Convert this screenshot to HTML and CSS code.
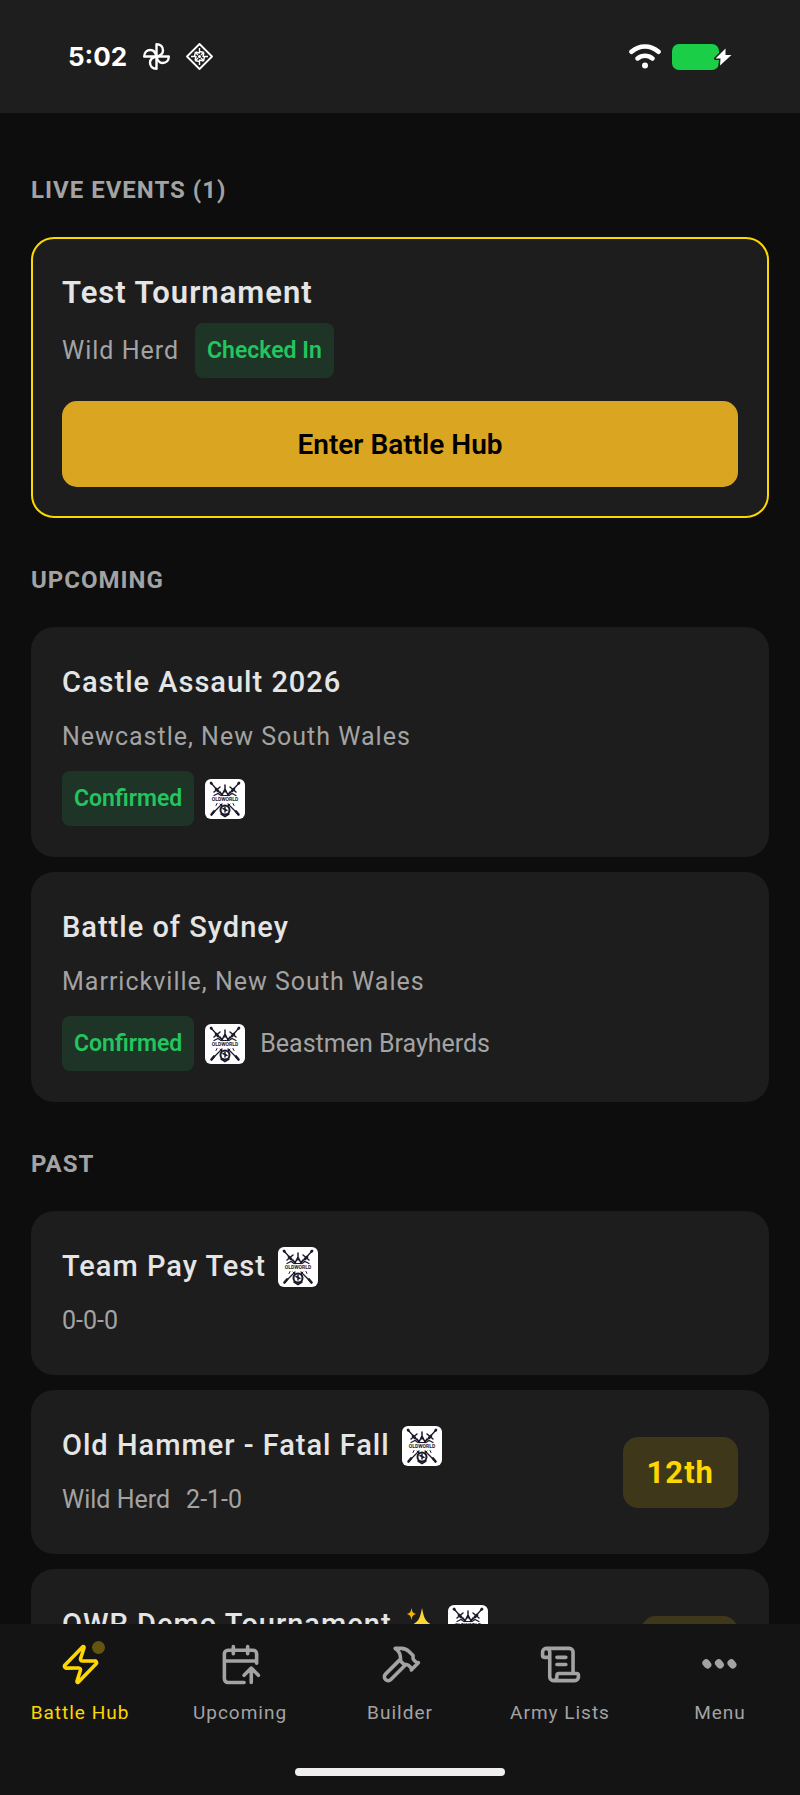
FILE: index.html
```
<!DOCTYPE html>
<html lang="en">
<head>
    <meta charset="UTF-8">
    <meta name="viewport" content="width=device-width, initial-scale=1.0">
    <title>Battle Hub</title>
    <link rel="stylesheet" href="styles.css">
</head>
<body>

    <!-- Shared club logo -->
    <svg class="sprite" aria-hidden="true">
        <symbol id="club-logo" viewBox="0 0 40 40">
            <rect width="40" height="40" rx="6" fill="#fff"/>
            <g stroke="#1c1a2a" fill="none" stroke-linecap="round">
                <path stroke-width="1.3" d="M6 4l9 10M34 4l-9 10M17 25L7 35M23 25l10 10"/>
                <path stroke-width="2.6" d="M6 4l.5.5M34 4l-.5.5M11 10l2 2M29 10l-2 2M6.5 35.500l2.500-3M33.500 35.500L31 32.500"/>
                <path stroke-width="1.5" d="M9 13l6-5M31 13l-6-5M15 13l2 3 3-6 3 6 2-3M20 6v7"/>
                <path stroke-width="1.2" d="M9 16.500l4-2 3 2M31 16.500l-4-2-3 2M17 16.500h6"/>
                <path stroke-width="1" d="M11 26.500l1-2M29 26.500l-1-2M15 25l2 2M25 25l-2 2"/>
                <circle stroke-width="2" cx="20" cy="31" r="4.500"/>
                <path stroke-width="1.500" d="M18 29.500l4 2M20 28v5M16 35l4 2.500 4-2.500"/>
            </g>
            <text class="logo-text" x="20" y="22" text-anchor="middle">OLDWORLD</text>
        </symbol>
    </svg>

    <header class="status-bar">
        <div class="status-group">
            <time class="clock">5:02</time>
            <svg class="status-icon" viewBox="0 0 27 27" fill="none" stroke="#fff" stroke-width="2.400" stroke-linejoin="round">
                <path d="M13.500 13.500V1.200c4 0 6.500 2.500 6.500 6.200 0 3-2 5.100-6.500 6.100z"/>
                <path d="M13.500 13.500h12.300c0 4-2.500 6.500-6.200 6.500-3 0-5.100-2-6.100-6.500z"/>
                <path d="M13.500 13.500v12.300C9.500 25.800 7 23.300 7 19.600c0-3 2-5.100 6.500-6.100z"/>
                <path d="M13.500 13.500H1.200C1.200 9.500 3.700 7 7.400 7c3 0 5.100 2 6.100 6.500z"/>
            </svg>
            <svg class="status-icon" viewBox="0 0 27 27" fill="none" stroke="#fff" stroke-linejoin="round">
                <path stroke-width="1.800" d="M13.500 1L26 13.500 13.500 26 1 13.500z"/>
                <path stroke-width="1.400" d="M13.500 5v5l-4-1M22 13.500h-5l1-4M13.500 22v-5l4 1M5 13.500h5l-1 4M9.500 9l-1 4M18 9.500l-4-1M17.500 18l1-4M9 17.500l4 1"/>
                <path stroke-width="1.400" d="M10 10l2 2M17 10l-2 2M10 17l2-2M17 17l-2-2"/>
                <circle cx="13.500" cy="13.500" r="1.500" fill="#fff" stroke="none"/>
            </svg>
        </div>
        <div class="status-group status-group-right">
            <svg class="wifi" viewBox="0 0 32 25" fill="none" stroke="#fff" stroke-width="4.600" stroke-linecap="round">
                <path d="M2.500 7.800c8-7 19-7 27 0M8.600 14.400c4.300-3.600 10.500-3.600 14.800 0"/>
                <circle cx="16" cy="21.500" r="3" fill="#fff" stroke="none"/>
            </svg>
            <svg class="battery" viewBox="0 0 60 26">
                <rect width="47" height="26" rx="7" fill="#1ace48"/>
                <path d="M53.500 4.500L43.500 14.500h5l-.5 7L59.500 11h-6z" fill="#fff" stroke="#1e1e1e" stroke-width="3" stroke-linejoin="round" paint-order="stroke"/>
            </svg>
        </div>
    </header>

    <main class="events">
        <section>
            <h2 class="section-title">LIVE EVENTS (1)</h2>
            <article class="card card-live">
                <h3 class="live-title">Test Tournament</h3>
                <div class="live-info">
                    <span class="card-sub">Wild Herd</span>
                    <span class="pill">Checked In</span>
                </div>
                <button type="button" class="enter-btn">Enter Battle Hub</button>
            </article>
        </section>

        <section>
            <h2 class="section-title">UPCOMING</h2>
            <div class="card-list">
                <article class="card">
                    <h3 class="card-title">Castle Assault 2026</h3>
                    <p class="card-sub">Newcastle, New South Wales</p>
                    <div class="tags">
                        <span class="pill">Confirmed</span>
                        <svg class="logo"><use href="#club-logo"/></svg>
                    </div>
                </article>
                <article class="card">
                    <h3 class="card-title">Battle of Sydney</h3>
                    <p class="card-sub">Marrickville, New South Wales</p>
                    <div class="tags">
                        <span class="pill">Confirmed</span>
                        <svg class="logo"><use href="#club-logo"/></svg>
                        <span class="army">Beastmen Brayherds</span>
                    </div>
                </article>
            </div>
        </section>

        <section>
            <h2 class="section-title">PAST</h2>
            <div class="card-list">
                <article class="card card-past">
                    <div>
                        <h3 class="card-title">Team Pay Test <svg class="logo"><use href="#club-logo"/></svg></h3>
                        <p class="result"><span>0-0-0</span></p>
                    </div>
                </article>
                <article class="card card-past">
                    <div>
                        <h3 class="card-title">Old Hammer - Fatal Fall <svg class="logo"><use href="#club-logo"/></svg></h3>
                        <p class="result"><span>Wild Herd</span><span>2-1-0</span></p>
                    </div>
                    <span class="rank">12th</span>
                </article>
                <article class="card card-past">
                    <div>
                        <h3 class="card-title">OWR Demo Tournament
                            <svg class="sparkles" viewBox="0 0 32 36">
                                <path d="M18 1c2 11 4 15 13 18-9 3-11 7-13 16-2-9-4-13-13-16C14 16 16 12 18 1z" fill="#fdd835"/>
                                <path d="M7.500 1c.7 4 1.500 5 4.500 6-3 1-3.800 2-4.500 6-.7-4-1.500-5-4.500-6 3-1 3.800-2 4.500-6z" fill="#f4b400"/>
                            </svg>
                            <svg class="logo"><use href="#club-logo"/></svg>
                        </h3>
                        <p class="result"><span>Wild Herd</span></p>
                    </div>
                    <span class="rank">4th</span>
                </article>
            </div>
        </section>
    </main>

    <footer class="bottom">
        <nav class="tabs">
            <a href="#" class="tab active">
                <span class="tab-icon">
                    <svg viewBox="0 0 24 24"><path d="M4 14a1 1 0 0 1-.78-1.630l9.900-10.200a.5.5 0 0 1 .86.460l-1.920 6.020A1 1 0 0 0 13 10h7a1 1 0 0 1 .78 1.630l-9.900 10.200a.5.5 0 0 1-.86-.460l1.920-6.020A1 1 0 0 0 11 14z"/></svg>
                    <span class="live-dot"></span>
                </span>
                Battle Hub
            </a>
            <a href="#" class="tab">
                <span class="tab-icon">
                    <svg viewBox="0 0 24 24"><path d="m14 18 4-4 4 4M16 2v4M18 22v-8M21 11.343V6a2 2 0 0 0-2-2H5a2 2 0 0 0-2 2v14a2 2 0 0 0 2 2h9M3 10h18M8 2v4"/></svg>
                </span>
                Upcoming
            </a>
            <a href="#" class="tab">
                <span class="tab-icon">
                    <svg viewBox="0 0 24 24"><path d="m15 12-8.373 8.373a1 1 0 1 1-3-3L12 9M18 15l4-4M21.500 11.500l-1.914-1.914A2 2 0 0 1 19 8.172V7l-2.260-2.260a6 6 0 0 0-4.202-1.756L9 2.960l.92.820A6.180 6.180 0 0 1 12 8.400V10l2 2h1.172a2 2 0 0 1 1.414.586L18.500 14.500"/></svg>
                </span>
                Builder
            </a>
            <a href="#" class="tab">
                <span class="tab-icon">
                    <svg viewBox="0 0 24 24"><path d="M15 12h-5M15 8h-5M19 17V5a2 2 0 0 0-2-2H4M8 21h12a2 2 0 0 0 2-2v-1a1 1 0 0 0-1-1H11a1 1 0 0 0-1 1v1a2 2 0 1 1-4 0V5a2 2 0 1 0-4 0v2a1 1 0 0 0 1 1h3"/></svg>
                </span>
                Army Lists
            </a>
            <a href="#" class="tab">
                <span class="tab-icon">
                    <svg viewBox="0 0 24 24"><path stroke-width="4.200" d="M4 11.200l.8.900M11 11.200l.8.900M18 11.200l.8.900"/></svg>
                </span>
                Menu
            </a>
        </nav>
        <div class="home-indicator"></div>
    </footer>

</body>
</html>
```
FILE: styles.css
```
* {
    box-sizing: border-box;
}

body {
    margin: 0;
    height: 100vh;
    display: flex;
    flex-direction: column;
    background: #0d0d0d;
    color: #e5e5e5;
    font-family: Roboto, "Liberation Sans", sans-serif;
    letter-spacing: 1px;
}

h2, h3, p {
    margin: 0;
}

.sprite {
    position: absolute;
    width: 0;
    height: 0;
}

/* Status bar */
.status-bar {
    flex: none;
    height: 113px;
    padding: 0 68px;
    display: flex;
    justify-content: space-between;
    align-items: center;
    background: #1e1e1e;
}

.status-group {
    display: flex;
    align-items: center;
    gap: 16px;
}

.status-group-right {
    gap: 11px;
}

.clock {
    font-family: Inter, sans-serif;
    font-size: 26px;
    font-weight: 700;
    letter-spacing: 0;
    color: #fff;
}

.status-icon {
    width: 27px;
    height: 27px;
}

.wifi {
    width: 32px;
    height: 25px;
}

.battery {
    width: 60px;
    height: 26px;
}

/* Event list */
.events {
    flex: 1;
    min-height: 0;
    overflow-y: auto;
    scrollbar-width: none;
    padding: 15px 31px;
}

.section-title {
    padding: 45px 0 30px;
    font-size: 24px;
    font-weight: 700;
    line-height: 34px;
    color: #a3a3a3;
}

.card-list {
    display: flex;
    flex-direction: column;
    gap: 15px;
}

.card {
    padding: 31px;
    border-radius: 23px;
    background: #1d1d1d;
}

.card-live {
    padding: 29px;
    border: 2px solid #ffd700;
}

.card-title,
.live-title {
    display: flex;
    align-items: center;
    gap: 12px;
    margin-bottom: 6px;
    font-size: 29px;
    font-weight: 500;
    line-height: 49px;
}

.live-title {
    font-size: 31px;
    font-weight: 600;
}

.card-sub,
.result {
    font-size: 25px;
    line-height: 47px;
    color: #a3a3a3;
}

.result {
    display: flex;
    gap: 16px;
    letter-spacing: 0;
}

.live-info {
    display: flex;
    align-items: center;
    gap: 16px;
    margin-bottom: 23px;
}

.pill {
    padding: 0 12px;
    border-radius: 8px;
    background: #1e3427;
    color: #22c55e;
    font-size: 23px;
    font-weight: 600;
    line-height: 55px;
    letter-spacing: 0;
}

.enter-btn {
    display: block;
    width: 100%;
    height: 86px;
    border: none;
    border-radius: 15px;
    background: #daa520;
    color: #000;
    font-family: inherit;
    font-size: 28px;
    font-weight: 600;
    cursor: pointer;
}

.tags {
    display: flex;
    align-items: center;
    gap: 11px;
    margin-top: 11px;
}

.army {
    margin-left: 4px;
    font-size: 25px;
    letter-spacing: 0;
    color: #a3a3a3;
}

.logo {
    flex: none;
    width: 40px;
    height: 40px;
}

.logo-text {
    font-size: 5px;
    font-weight: 700;
    letter-spacing: 0;
    fill: #1c1a2a;
}

.sparkles {
    width: 32px;
    height: 36px;
}

.card-past {
    display: flex;
    justify-content: space-between;
    align-items: center;
}

.rank {
    padding: 0 24px;
    border-radius: 15px;
    background: #3f371a;
    color: #ffd700;
    font-size: 31px;
    font-weight: 700;
    line-height: 71px;
}

/* Bottom navigation */
.bottom {
    flex: none;
    height: 171px;
    padding: 19px 0;
    display: flex;
    flex-direction: column;
    justify-content: space-between;
    align-items: center;
    background: #141414;
}

.tabs {
    width: 100%;
    display: flex;
}

.tab {
    flex: 1;
    display: flex;
    flex-direction: column;
    align-items: center;
    gap: 13px;
    font-size: 19px;
    line-height: 28px;
    color: #a3a3a3;
    text-decoration: none;
}

.tab.active {
    color: #ffd700;
}

.tab-icon {
    position: relative;
    width: 43px;
    height: 43px;
}

.tab-icon svg {
    display: block;
    width: 100%;
    height: 100%;
    fill: none;
    stroke: currentColor;
    stroke-width: 2;
    stroke-linecap: round;
    stroke-linejoin: round;
}

.live-dot {
    position: absolute;
    top: -2px;
    right: -3px;
    width: 13px;
    height: 13px;
    border-radius: 50%;
    background: #64540f;
}

.home-indicator {
    width: 210px;
    height: 8px;
    border-radius: 4px;
    background: #f0eeee;
}
```
